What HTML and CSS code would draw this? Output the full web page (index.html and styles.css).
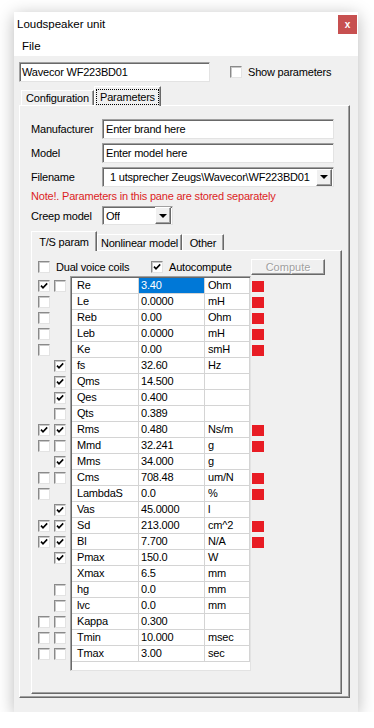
FILE: index.html
```html
<!DOCTYPE html>
<html>
<head>
<meta charset="utf-8">
<link rel="stylesheet" href="styles.css">
</head>
<body>
<div class="window">
  <div class="titlebar">
    <span class="title">Loudspeaker unit</span>
    <span class="close">x</span>
  </div>
  <div class="menubar"><span class="menu">File</span></div>
  <div class="client">
    <div class="toprow">
      <div class="textbox namebox">Wavecor WF223BD01</div>
      <div class="check showparams"><span class="cb"></span><span class="lbl">Show parameters</span></div>
    </div>
    <div class="tabs outertabs">
      <span class="tab config">Configuration</span>
      <span class="tab active params"><span class="focus">Parameters</span></span>
    </div>
    <div class="panel outer">
      <div class="frow"><span class="flabel">Manufacturer</span><div class="textbox wide">Enter brand here</div></div>
      <div class="frow"><span class="flabel">Model</span><div class="textbox wide">Enter model here</div></div>
      <div class="frow"><span class="flabel">Filename</span><div class="textbox wide combo"><span class="ctext fname">1 utsprecher Zeugs\Wavecor\WF223BD01</span><span class="dd"><span class="tri"></span></span></div></div>
      <div class="note">Note!. Parameters in this pane are stored separately</div>
      <div class="frow creep"><span class="flabel">Creep model</span><div class="textbox combo small"><span class="ctext">Off</span><span class="dd"><span class="tri"></span></span></div></div>
      <div class="tabs innertabs">
        <span class="tab active ts">T/S param</span>
        <span class="tab nl">Nonlinear model</span>
        <span class="tab other">Other</span>
      </div>
      <div class="panel inner">
        <div class="optrow">
          <div class="check dual"><span class="cb"></span><span class="lbl">Dual voice coils</span></div>
          <div class="check auto"><span class="cb on"><svg viewBox="0 0 10 10"><path d="M2 4.6 L4 6.8 L8.2 2.4"/></svg></span><span class="lbl">Autocompute</span></div>
          <div class="btn">Compute</div>
        </div>
        <div class="tsbody">
          <div class="cbcol">
            <div class="crow"><span class="cb on"><svg viewBox="0 0 10 10"><path d="M2 4.6 L4 6.8 L8.2 2.4"/></svg></span><span class="cb"></span></div>
            <div class="crow"><span class="cb"></span><span class="slot"></span></div>
            <div class="crow"><span class="cb"></span><span class="slot"></span></div>
            <div class="crow"><span class="cb"></span><span class="slot"></span></div>
            <div class="crow"><span class="cb"></span><span class="slot"></span></div>
            <div class="crow"><span class="slot"></span><span class="cb on"><svg viewBox="0 0 10 10"><path d="M2 4.6 L4 6.8 L8.2 2.4"/></svg></span></div>
            <div class="crow"><span class="slot"></span><span class="cb on"><svg viewBox="0 0 10 10"><path d="M2 4.6 L4 6.8 L8.2 2.4"/></svg></span></div>
            <div class="crow"><span class="slot"></span><span class="cb on"><svg viewBox="0 0 10 10"><path d="M2 4.6 L4 6.8 L8.2 2.4"/></svg></span></div>
            <div class="crow"><span class="slot"></span><span class="cb"></span></div>
            <div class="crow"><span class="cb on"><svg viewBox="0 0 10 10"><path d="M2 4.6 L4 6.8 L8.2 2.4"/></svg></span><span class="cb on"><svg viewBox="0 0 10 10"><path d="M2 4.6 L4 6.8 L8.2 2.4"/></svg></span></div>
            <div class="crow"><span class="cb"></span><span class="cb"></span></div>
            <div class="crow"><span class="slot"></span><span class="cb on"><svg viewBox="0 0 10 10"><path d="M2 4.6 L4 6.8 L8.2 2.4"/></svg></span></div>
            <div class="crow"><span class="cb"></span><span class="cb"></span></div>
            <div class="crow"><span class="cb"></span><span class="slot"></span></div>
            <div class="crow"><span class="slot"></span><span class="cb on"><svg viewBox="0 0 10 10"><path d="M2 4.6 L4 6.8 L8.2 2.4"/></svg></span></div>
            <div class="crow"><span class="cb on"><svg viewBox="0 0 10 10"><path d="M2 4.6 L4 6.8 L8.2 2.4"/></svg></span><span class="cb on"><svg viewBox="0 0 10 10"><path d="M2 4.6 L4 6.8 L8.2 2.4"/></svg></span></div>
            <div class="crow"><span class="cb on"><svg viewBox="0 0 10 10"><path d="M2 4.6 L4 6.8 L8.2 2.4"/></svg></span><span class="cb on"><svg viewBox="0 0 10 10"><path d="M2 4.6 L4 6.8 L8.2 2.4"/></svg></span></div>
            <div class="crow"><span class="slot"></span><span class="cb on"><svg viewBox="0 0 10 10"><path d="M2 4.6 L4 6.8 L8.2 2.4"/></svg></span></div>
            <div class="crow"><span class="slot"></span><span class="slot"></span></div>
            <div class="crow"><span class="slot"></span><span class="cb"></span></div>
            <div class="crow"><span class="slot"></span><span class="cb"></span></div>
            <div class="crow"><span class="cb"></span><span class="cb"></span></div>
            <div class="crow"><span class="cb"></span><span class="cb"></span></div>
            <div class="crow"><span class="cb"></span><span class="cb"></span></div>
          </div>
          <div class="grid">
            <div class="grow"><span class="c n">Re</span><span class="c v sel">3.40</span><span class="c u">Ohm</span></div>
            <div class="grow"><span class="c n">Le</span><span class="c v">0.0000</span><span class="c u">mH</span></div>
            <div class="grow"><span class="c n">Reb</span><span class="c v">0.00</span><span class="c u">Ohm</span></div>
            <div class="grow"><span class="c n">Leb</span><span class="c v">0.0000</span><span class="c u">mH</span></div>
            <div class="grow"><span class="c n">Ke</span><span class="c v">0.00</span><span class="c u">smH</span></div>
            <div class="grow"><span class="c n">fs</span><span class="c v">32.60</span><span class="c u">Hz</span></div>
            <div class="grow"><span class="c n">Qms</span><span class="c v">14.500</span><span class="c u"></span></div>
            <div class="grow"><span class="c n">Qes</span><span class="c v">0.400</span><span class="c u"></span></div>
            <div class="grow"><span class="c n">Qts</span><span class="c v">0.389</span><span class="c u"></span></div>
            <div class="grow"><span class="c n">Rms</span><span class="c v">0.480</span><span class="c u">Ns/m</span></div>
            <div class="grow"><span class="c n">Mmd</span><span class="c v">32.241</span><span class="c u">g</span></div>
            <div class="grow"><span class="c n">Mms</span><span class="c v">34.000</span><span class="c u">g</span></div>
            <div class="grow"><span class="c n">Cms</span><span class="c v">708.48</span><span class="c u">um/N</span></div>
            <div class="grow"><span class="c n">LambdaS</span><span class="c v">0.0</span><span class="c u">%</span></div>
            <div class="grow"><span class="c n">Vas</span><span class="c v">45.0000</span><span class="c u">l</span></div>
            <div class="grow"><span class="c n">Sd</span><span class="c v">213.000</span><span class="c u">cm^2</span></div>
            <div class="grow"><span class="c n">Bl</span><span class="c v">7.700</span><span class="c u">N/A</span></div>
            <div class="grow"><span class="c n">Pmax</span><span class="c v">150.0</span><span class="c u">W</span></div>
            <div class="grow"><span class="c n">Xmax</span><span class="c v">6.5</span><span class="c u">mm</span></div>
            <div class="grow"><span class="c n">hg</span><span class="c v">0.0</span><span class="c u">mm</span></div>
            <div class="grow"><span class="c n">lvc</span><span class="c v">0.0</span><span class="c u">mm</span></div>
            <div class="grow"><span class="c n">Kappa</span><span class="c v">0.300</span><span class="c u"></span></div>
            <div class="grow"><span class="c n">Tmin</span><span class="c v">10.000</span><span class="c u">msec</span></div>
            <div class="grow"><span class="c n">Tmax</span><span class="c v">3.00</span><span class="c u">sec</span></div>
          </div>
          <div class="redcol">
            <div class="rrow"><span class="mark"></span></div>
            <div class="rrow"><span class="mark"></span></div>
            <div class="rrow"><span class="mark"></span></div>
            <div class="rrow"><span class="mark"></span></div>
            <div class="rrow"><span class="mark"></span></div>
            <div class="rrow"></div>
            <div class="rrow"></div>
            <div class="rrow"></div>
            <div class="rrow"></div>
            <div class="rrow"><span class="mark"></span></div>
            <div class="rrow"><span class="mark"></span></div>
            <div class="rrow"></div>
            <div class="rrow"><span class="mark"></span></div>
            <div class="rrow"><span class="mark"></span></div>
            <div class="rrow"></div>
            <div class="rrow"><span class="mark"></span></div>
            <div class="rrow"><span class="mark"></span></div>
            <div class="rrow"></div>
            <div class="rrow"></div>
            <div class="rrow"></div>
            <div class="rrow"></div>
            <div class="rrow"></div>
            <div class="rrow"></div>
            <div class="rrow"></div>
          </div>
        </div>
      </div>
    </div>
  </div>
</div>
</body>
</html>
```

FILE: styles.css
```css
* { box-sizing: border-box; }
html, body { margin: 0; padding: 0; background: #fff; }
body {
  font-family: "Liberation Sans", Arial, sans-serif;
  font-size: 11px;
  letter-spacing: -0.2px;
  color: #000;
}
.window {
  width: 344px;
  height: 700px;
  margin: 12px 0 0 14px;
  background: #f0f0f0;
  box-shadow: 0 3px 16px rgba(0, 0, 0, 0.28);
  display: flex;
  flex-direction: column;
}
.titlebar {
  height: 24px;
  background: #fff;
  display: flex;
  justify-content: space-between;
  align-items: center;
  padding-left: 3px;
}
.title { font-size: 11.5px; letter-spacing: 0; }
.close {
  align-self: flex-start;
  width: 19px;
  height: 19px;
  margin: 3px 1px 0 0;
  background: #c75050;
  color: #fff;
  font-weight: bold;
  font-size: 10px;
  letter-spacing: 0;
  display: flex;
  align-items: center;
  justify-content: center;
}
.menubar {
  height: 20px;
  background: #fff;
  padding-left: 8px;
  display: flex;
  align-items: center;
}
.menu { font-size: 11.5px; letter-spacing: 0; }
.client {
  flex: 1;
  display: flex;
  flex-direction: column;
  padding: 6px 8px 14px 5px;
}
.toprow { display: flex; align-items: center; height: 20px; }
.textbox {
  height: 20px;
  background: #fff;
  border-top: 1px solid #a0a0a0;
  border-left: 1px solid #a0a0a0;
  border-right: 1px solid #e3e3e3;
  border-bottom: 1px solid #e3e3e3;
  box-shadow: inset 1px 1px 0 #696969;
  padding: 0 0 0 3px;
  line-height: 18px;
  white-space: nowrap;
  overflow: hidden;
}
.namebox { width: 191px; padding-left: 2px; }
.check { display: flex; align-items: center; }
.check .lbl { margin-left: 6px; }
.showparams { margin-left: 20px; }
.cb {
  width: 12px;
  height: 12px;
  flex: none;
  background: #fff;
  border-top: 1px solid #8a8a8a;
  border-left: 1px solid #8a8a8a;
  border-right: 1px solid #e3e3e3;
  border-bottom: 1px solid #e3e3e3;
  box-shadow: inset 1px 1px 0 #c8c8c8;
  display: block;
}
.cb svg { display: block; width: 10px; height: 10px; }
.cb svg path { fill: none; stroke: #000; stroke-width: 1.6; }
.slot { width: 12px; height: 12px; flex: none; display: block; }

.tabs { display: flex; align-items: flex-end; position: relative; z-index: 1; }
.tab {
  display: flex;
  align-items: center;
  justify-content: center;
  border-top: 1px solid #fff;
  border-left: 1px solid #fff;
  border-right: 1px solid #696969;
  box-shadow: inset -1px 0 0 #a0a0a0;
  background: #f0f0f0;
  white-space: nowrap;
}
.tab.active { margin-bottom: -1px; }
.outertabs { margin-top: 4px; height: 19px; padding-left: 2px; }
.config { width: 73px; height: 15px; }
.params { width: 67px; height: 20px; }
.focus { border: 1px dotted #000; padding: 0 3px; line-height: 14px; }

.panel {
  border-top: 1px solid #fff;
  border-left: 1px solid #fff;
  border-right: 1px solid #696969;
  border-bottom: 1px solid #696969;
  box-shadow: inset -1px -1px 0 #a0a0a0;
  display: flex;
  flex-direction: column;
}
.outer { flex: 1; padding: 13px 7px 3px 11px; }
.frow { display: flex; align-items: center; height: 20px; margin-bottom: 4px; }
.flabel { width: 71px; flex: none; }
.wide { width: 232px; }
.combo { display: flex; align-items: center; justify-content: space-between; padding-right: 0; }
.ctext { overflow: hidden; white-space: nowrap; }
.fname { padding-left: 4px; }
.dd {
  width: 16px;
  height: 17px;
  flex: none;
  margin: 0 1px 0 0;
  background: #f0f0f0;
  border-top: 1px solid #fff;
  border-left: 1px solid #fff;
  border-right: 1px solid #696969;
  border-bottom: 1px solid #696969;
  box-shadow: inset -1px -1px 0 #a0a0a0;
  display: flex;
  align-items: center;
  justify-content: center;
}
.tri {
  width: 0; height: 0;
  border-left: 4px solid transparent;
  border-right: 4px solid transparent;
  border-top: 4px solid #000;
}
.note { color: #dc1e1e; line-height: 19px; height: 19px; margin-top: -4px; }
.creep { height: 19px; margin-bottom: 0; }
.small { width: 71px; height: 19px; padding-left: 3px; }

.innertabs { height: 25px; }
.ts { width: 66px; height: 20px; }
.nl { width: 85px; height: 16px; }
.other { width: 42px; height: 16px; }

.inner { flex: 1; padding: 8px 6px 0 6px; }
.optrow { display: flex; align-items: center; height: 16px; }
.dual { width: 113px; }
.auto { width: 100px; }
.btn {
  width: 74px;
  height: 16px;
  border-top: 1px solid #fff;
  border-left: 1px solid #fff;
  border-right: 1px solid #696969;
  border-bottom: 1px solid #696969;
  box-shadow: inset -1px -1px 0 #a0a0a0;
  color: #a0a0a0;
  text-shadow: 1px 1px 0 #fff;
  display: flex;
  align-items: center;
  justify-content: center;
  letter-spacing: 0;
}
.tsbody { display: flex; align-items: flex-start; margin-top: 1px; }
.cbcol { width: 32px; padding-top: 2px; }
.crow { height: 16px; display: flex; align-items: center; gap: 4px; }
.grid {
  width: 181px;
  background: #fff;
  border-top: 1px solid #a0a0a0;
  border-left: 1px solid #a0a0a0;
  border-right: 1px solid #e3e3e3;
  border-bottom: 1px solid #e3e3e3;
  box-shadow: inset 1px 1px 0 #696969;
  padding: 1px 0 8px 1px;
}
.grow {
  display: grid;
  grid-template-columns: 67px 66px 45px;
  height: 16px;
  border-bottom: 1px solid #d4d4d4;
}
.c {
  border-right: 1px solid #d4d4d4;
  line-height: 15px;
  white-space: nowrap;
  overflow: hidden;
}
.n { padding-left: 5px; }
.v { padding-left: 2px; }
.u { padding-left: 3px; }
.sel { background: #0078d7; color: #fff; }
.redcol { padding-top: 2px; margin-left: 1px; }
.rrow { height: 16px; display: flex; align-items: center; }
.mark { width: 12px; height: 11px; background: #e81c24; display: block; }
```
